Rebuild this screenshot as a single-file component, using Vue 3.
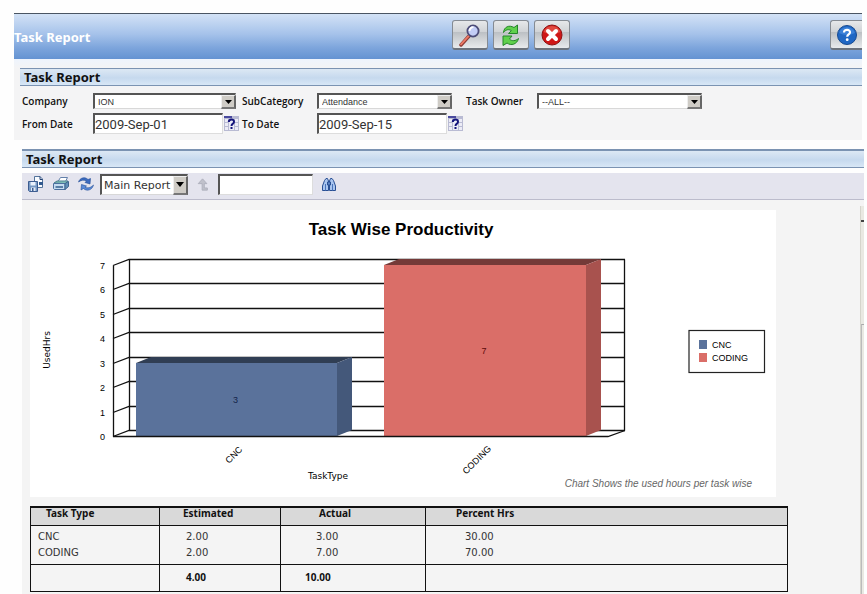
<script setup>
import { ref } from 'vue'

const company = ref('ION')
const subCategory = ref('Attendance')
const taskOwner = ref('--ALL--')
const fromDate = ref('2009-Sep-01')
const toDate = ref('2009-Sep-15')
const reportView = ref('Main Report')
const searchText = ref('')

const axis = { frontX: 83, backX: 99, rightX: 595, frontZero: 226, backZero: 220, unit: 24.43 }
const ticks = [0, 1, 2, 3, 4, 5, 6, 7].map((value) => ({
  value,
  front: Math.round(axis.frontZero - value * axis.unit) + 0.5,
  back: Math.round(axis.backZero - value * axis.unit) + 0.5,
}))

const bars = [
  { name: 'CNC', value: 3, x: 106, right: 307, labelX: 206, labelY: 247, face: '#5a729b', side: '#44587a', top: '#303e54', ink: '#14244a' },
  { name: 'CODING', value: 7, x: 354, right: 556, labelX: 449, labelY: 252, face: '#da6e68', side: '#a8524e', top: '#743a38', ink: '#5a0a0a' },
].map((bar) => ({
  ...bar,
  y: Math.round(axis.frontZero - bar.value * axis.unit),
  depth: 15,
  rise: 6,
}))

const rows = [
  { type: 'CNC', estimated: '2.00', actual: '3.00', percent: '30.00' },
  { type: 'CODING', estimated: '2.00', actual: '7.00', percent: '70.00' },
]
</script>

<template>
  <div class="page">
    <header class="banner">
      <h1 class="banner-title">Task Report</h1>
      <div class="banner-actions">
        <button type="button" class="tool-button" aria-label="Search">
          <svg width="24" height="24" viewBox="0 0 24 24">
            <path d="M3 22 L11 13" stroke="#8d3b35" stroke-width="3.4" stroke-linecap="round" />
            <path d="M3 21.4 L11 12.6" stroke="#ee7a66" stroke-width="1.8" stroke-linecap="round" />
            <circle cx="15" cy="8" r="5.600" fill="#c3cdf6" stroke="#4c4c78" stroke-width="1.8" />
            <path d="M11.5 8 A3.8 3.8 0 0 1 15.5 4.2" fill="none" stroke="#fff" stroke-width="1.8" />
          </svg>
        </button>
        <button type="button" class="tool-button" aria-label="Refresh">
          <svg width="24" height="24" viewBox="0 0 24 24">
            <path d="M4.500 9.500 C5 4 10 1.500 15 4.500 L18.500 2 V10.500 H9.500 L12.300 7.600 C9.500 6 7 6.500 4.500 9.500 Z" fill="#5fd04c" stroke="#25852a" stroke-linejoin="round" />
            <path d="M19.500 15.500 C18 21.500 12 23 8 20 L4 22.500 V13 H13 L10.500 16 C13 18.500 16.500 18 19.500 15.500 Z" fill="#5fd04c" stroke="#25852a" stroke-linejoin="round" />
          </svg>
        </button>
        <button type="button" class="tool-button" aria-label="Close">
          <svg width="24" height="24" viewBox="0 0 24 24">
            <circle cx="12" cy="12" r="10" fill="#cf1717" stroke="#8e1212" />
            <path d="M3.500 9 A9 9 0 0 1 20.500 9 Q12 13 3.500 9 Z" fill="#e0493f" />
            <path d="M8 8 L16 16 M16 8 L8 16" stroke="#fff" stroke-width="4" stroke-linecap="round" />
          </svg>
        </button>
      </div>
      <button type="button" class="tool-button help-button" aria-label="Help">
        <svg width="22" height="22" viewBox="0 0 22 22">
          <circle cx="11" cy="11" r="9.500" fill="#1f67c4" stroke="#174a91" />
          <path d="M3 9 A8.500 8.500 0 0 1 19 9 Q11 13 3 9 Z" fill="#3a80d8" />
          <path d="M8 8.500 C8 4.800 14.300 5 14 8.500 C13.800 10.600 11.200 10.400 11.200 12.800" fill="none" stroke="#fff" stroke-width="2.200" />
          <circle cx="11.200" cy="15.700" r="1.400" fill="#fff" />
        </svg>
      </button>
    </header>

    <section class="filter-panel">
      <h2 class="panel-title">Task Report</h2>
      <form class="filters" @submit.prevent>
        <label for="company">Company</label>
        <div class="drop drop-company">
          <select id="company" v-model="company"><option>ION</option></select>
          <span class="drop-arrow"><svg width="7" height="4" viewBox="0 0 7 4"><path d="M0 0H7L3.500 4Z" /></svg></span>
        </div>
        <label for="sub-category">SubCategory</label>
        <div class="drop drop-sub">
          <select id="sub-category" v-model="subCategory"><option>Attendance</option></select>
          <span class="drop-arrow"><svg width="7" height="4" viewBox="0 0 7 4"><path d="M0 0H7L3.500 4Z" /></svg></span>
        </div>
        <label for="task-owner">Task Owner</label>
        <div class="drop">
          <select id="task-owner" v-model="taskOwner"><option>--ALL--</option></select>
          <span class="drop-arrow"><svg width="7" height="4" viewBox="0 0 7 4"><path d="M0 0H7L3.500 4Z" /></svg></span>
        </div>
        <label for="from-date">From Date</label>
        <div class="date-field">
          <input id="from-date" v-model="fromDate" type="text" />
          <button type="button" class="calendar-button" aria-label="Pick from date">
            <svg width="15" height="15" viewBox="0 0 15 15">
              <path d="M0 0H15V15H0Z" fill="#b9bbd3" />
              <path d="M0 0H8V2H0Z" fill="#4a4a9e" />
              <path d="M1 3H4V6H1ZM1 7H4V10H1ZM1 11H4V14H1ZM11 3H14V6H11ZM11 7H14V10H11ZM11 11H14V14H11ZM5 3H10V14H5Z" fill="#ececf6" />
              <path d="M4.800 6 C4.800 2.600 10.200 2.600 10 6 C9.900 7.800 7.500 7.600 7.500 10" fill="none" stroke="#15157c" stroke-width="2" />
              <path d="M6.500 11H8.500V13H6.500Z" fill="#15157c" />
            </svg>
          </button>
        </div>
        <label for="to-date">To Date</label>
        <div class="date-field">
          <input id="to-date" v-model="toDate" type="text" />
          <button type="button" class="calendar-button" aria-label="Pick to date">
            <svg width="15" height="15" viewBox="0 0 15 15">
              <path d="M0 0H15V15H0Z" fill="#b9bbd3" />
              <path d="M0 0H8V2H0Z" fill="#4a4a9e" />
              <path d="M1 3H4V6H1ZM1 7H4V10H1ZM1 11H4V14H1ZM11 3H14V6H11ZM11 7H14V10H11ZM11 11H14V14H11ZM5 3H10V14H5Z" fill="#ececf6" />
              <path d="M4.800 6 C4.800 2.600 10.200 2.600 10 6 C9.900 7.800 7.500 7.600 7.500 10" fill="none" stroke="#15157c" stroke-width="2" />
              <path d="M6.500 11H8.500V13H6.500Z" fill="#15157c" />
            </svg>
          </button>
        </div>
      </form>
    </section>

    <section class="report-panel">
      <h2 class="panel-title">Task Report</h2>
      <div class="toolbar">
        <button type="button" class="icon-button" aria-label="Export">
          <svg width="16" height="16" viewBox="0 0 16 16">
            <path d="M6.500 0.500H12L14.500 3V11.500H6.500Z" fill="#f8fbff" stroke="#53739a" />
            <path d="M12 0.500V3.500H14.500" fill="none" stroke="#223f70" />
            <path d="M11 6H15V9H11Z" fill="#31598e" />
            <path d="M0.500 5.500H9.500V15.500H1.500L0.500 14.500Z" fill="#7799c4" stroke="#3d5d91" />
            <path d="M2.500 6H7.500V9.500H2.500Z" fill="#eaf2fd" />
            <path d="M3 11.500H7.500V15H3Z" fill="#e3ebf6" />
            <path d="M4 12H5.500V15H4Z" fill="#3d5d91" />
          </svg>
        </button>
        <button type="button" class="icon-button" aria-label="Print">
          <svg width="16" height="16" viewBox="0 0 16 16">
            <path d="M5 5.500L7.500 1.500H14.500L12.500 5.500Z" fill="#fff" stroke="#6280aa" />
            <path d="M1 7L4 5H15L12.500 7.500Z" fill="#83c4ba" stroke="#4c7f90" />
            <path d="M0.500 7.500H12V13.500H1.500L0.500 12.500Z" fill="#c5dcf0" stroke="#4b709f" />
            <path d="M12 7.500L15.500 5.500V10.500L12 13.500Z" fill="#6290b7" stroke="#3c658f" />
            <path d="M2.500 11H10" stroke="#35618f" stroke-width="1.500" />
          </svg>
        </button>
        <button type="button" class="icon-button" aria-label="Reload">
          <svg width="16" height="16" viewBox="0 0 16 16">
            <path d="M0.500 6C2 1.500 7 0.500 10 3.500L12.500 2.500L12 8L7 6.500L8.500 5C6 3.500 3.500 4 0.500 6Z" fill="#3d6cc0" stroke="#224b96" stroke-width="0.600" />
            <path d="M15.500 9C14 14.500 8.500 15.500 5.500 12.500L3 14L3.500 8.500L8.500 10L7 11.200C9.500 12.500 12.500 12 15.500 9Z" fill="#5a8bd8" stroke="#224b96" stroke-width="0.600" />
          </svg>
        </button>
        <div class="drop view-drop">
          <select v-model="reportView" aria-label="Report view"><option>Main Report</option></select>
          <span class="drop-arrow"><svg width="8" height="5" viewBox="0 0 8 5"><path d="M0 0H8L4 5Z" /></svg></span>
        </div>
        <button type="button" class="icon-button up-button" aria-label="Go to parent">
          <svg width="12" height="13" viewBox="0 0 12 15">
            <path d="M5.500 1L10.500 6.500H7.500V11.500H11V14H5V6.500H0.500Z" fill="#c0c1cb" stroke="#acaebb" />
          </svg>
        </button>
        <input v-model="searchText" class="find-input" type="text" aria-label="Find text" />
        <button type="button" class="icon-button" aria-label="Find">
          <svg width="14" height="15" viewBox="0 0 14 15">
            <path d="M2.500 3.500L4 1.500H5.500L6.500 4V13.500H0.500V9Z" fill="#a9c5ef" stroke="#294f93" />
            <path d="M11.500 3.500L10 1.500H8.500L7.500 4V13.500H13.500V9Z" fill="#a9c5ef" stroke="#294f93" />
            <path d="M3.500 7V13.500M10.500 7V13.500" stroke="#4a74ba" />
            <path d="M5.500 5H8.500V8H5.500Z" fill="#5d84c4" stroke="#294f93" />
          </svg>
        </button>
      </div>

      <div class="report-body">
        <div class="report-content">
          <svg class="chart" viewBox="0 0 746 287" role="img" aria-label="Task Wise Productivity">
            <rect width="746" height="287" fill="#fff" />
            <text class="chart-title" x="371" y="25" text-anchor="middle">Task Wise Productivity</text>

            <g stroke="#111" stroke-width="1.300" fill="none">
              <template v-for="tick in ticks" :key="tick.value">
                <path :d="`M${axis.frontX} ${tick.front}L${axis.backX} ${tick.back}H${axis.rightX}`" />
              </template>
              <path :d="`M${axis.frontX + 0.5} ${ticks[7].front}V${ticks[0].front}`" />
              <path :d="`M${axis.backX + 0.5} ${ticks[7].back}V${ticks[0].back}`" />
              <path :d="`M${axis.rightX - 0.5} ${ticks[7].back}V${ticks[0].back}`" />
            </g>

            <g v-for="bar in bars" :key="bar.name">
              <path :fill="bar.top" :d="`M${bar.x} ${bar.y}L${bar.x + bar.depth} ${bar.y - bar.rise}H${bar.right + bar.depth}L${bar.right} ${bar.y}Z`" />
              <path :fill="bar.side" :d="`M${bar.right} ${bar.y}l${bar.depth} ${-bar.rise}V${axis.backZero}L${bar.right} ${axis.frontZero}Z`" />
              <rect :fill="bar.face" :x="bar.x" :y="bar.y" :width="bar.right - bar.x" :height="axis.frontZero - bar.y" />
              <text class="chart-label" :fill="bar.ink" :x="(bar.x + bar.right) / 2 - 1" :y="(bar.y + axis.frontZero) / 2 + 3" text-anchor="middle">{{ bar.value }}</text>
              <text class="chart-label" text-anchor="middle" :transform="`translate(${bar.labelX} ${bar.labelY}) rotate(-45)`">{{ bar.name }}</text>
            </g>
            <path :d="`M${axis.frontX} 226.500H578L595 220.500`" stroke="#111" stroke-width="1.300" fill="none" />

            <text v-for="tick in ticks" :key="tick.value" class="chart-label" x="75" :y="tick.front + 3" text-anchor="end">{{ tick.value }}</text>
            <text class="chart-axis" text-anchor="middle" transform="translate(20 140) rotate(-90)">UsedHrs</text>
            <text class="chart-axis" x="298" y="269" text-anchor="middle">TaskType</text>

            <rect x="659" y="120.500" width="75.500" height="42" fill="#fff" stroke="#222" stroke-width="1.200" />
            <g v-for="(bar, index) in bars" :key="bar.name">
              <rect :fill="bar.face" x="669" :y="130 + index * 13" width="8" height="9" />
              <text class="chart-label" x="682" :y="138 + index * 13">{{ bar.name }}</text>
            </g>
            <text class="chart-note" x="722" y="277" text-anchor="end">Chart Shows the used hours per task wise</text>
          </svg>

          <table class="report-table">
            <colgroup>
              <col class="col-type" />
              <col class="col-estimated" />
              <col class="col-actual" />
              <col />
            </colgroup>
            <thead>
              <tr>
                <th>Task Type</th>
                <th>Estimated</th>
                <th>Actual</th>
                <th>Percent Hrs</th>
              </tr>
            </thead>
            <tbody>
              <tr v-for="row in rows" :key="row.type">
                <td>{{ row.type }}</td>
                <td>{{ row.estimated }}</td>
                <td>{{ row.actual }}</td>
                <td>{{ row.percent }}</td>
              </tr>
            </tbody>
            <tfoot>
              <tr>
                <td></td>
                <td>4.00</td>
                <td>10.00</td>
                <td></td>
              </tr>
            </tfoot>
          </table>
        </div>
        <div class="scroll-edge"><span class="scroll-cap"></span><span class="scroll-thumb"></span></div>
      </div>
    </section>
  </div>
</template>

<style>
body {
  margin: 0;
  background: #fefefe;
}
</style>

<style scoped>
.page,
.page * {
  box-sizing: border-box;
}

.page {
  display: flex;
  flex-direction: column;
  min-height: 100vh;
  padding: 13px 3px 0 14px;
  font-family: "Noto Sans", "Open Sans", sans-serif;
  color: #111;
}

button {
  margin: 0;
  padding: 0;
  border: 0;
  background: none;
}

svg {
  display: block;
}

.banner {
  display: flex;
  align-items: flex-start;
  height: 46px;
  margin-right: 2px;
  border-top: 1px solid #4a5563;
  background: linear-gradient(#d3e2f6, #a5c2ea 45%, #7da5dc 75%, #6493d2);
}

.banner-title {
  width: 51.7%;
  margin: 0;
  font-size: 13px;
  font-weight: 700;
  line-height: 46px;
  color: #fff;
}

.banner-actions {
  display: flex;
  flex: 1;
  gap: 5px;
  padding-top: 6px;
}

.tool-button {
  display: flex;
  align-items: center;
  justify-content: center;
  width: 36px;
  height: 30px;
  border: 1px solid #858b93;
  border-bottom: 2px solid #6c737d;
  border-radius: 3px;
  background: linear-gradient(#e6e8ea, #d0d3d6 40%, #bcc0c4 42%, #e8eaec);
}

.help-button {
  width: 32px;
  margin-top: 6px;
  border-right: 0;
  border-radius: 3px 0 0 3px;
}

.filter-panel {
  margin-right: 2px;
  padding: 9px 0 0 6px;
  background: linear-gradient(#eef4fd, #f4f4f5 9px);
}

.panel-title {
  height: 18px;
  margin: 0;
  padding-left: 4px;
  border-top: 1px solid #7b93b2;
  border-bottom: 1px solid #7b93b2;
  background: linear-gradient(#dce8f4, #c6d9ee 55%, #d8e7f6);
  font-size: 13px;
  font-weight: 700;
  line-height: 17px;
}

.filters {
  display: grid;
  grid-template-columns: 71px 149px 75px 149px 71px 165px;
  align-items: center;
  row-gap: 4px;
  padding: 7px 0 6px 2px;
}

.filters label {
  font-family: "Open Sans", "Noto Sans", sans-serif;
  font-size: 10px;
  font-weight: 600;
  line-height: 16px;
}

.drop {
  position: relative;
  height: 16px;
}

.drop-company {
  width: 143px;
}

.drop-sub {
  width: 135px;
}

.drop select {
  display: block;
  width: 100%;
  height: 100%;
  margin: 0;
  padding: 0 16px 0 3px;
  appearance: none;
  border: 1px solid #d8d8d8;
  border-top: 2px solid #555;
  border-left: 2px solid #555;
  border-radius: 0;
  background: #fff;
  font-family: "Liberation Sans", sans-serif;
  font-size: 9px;
  color: #333;
}

.drop-arrow {
  position: absolute;
  top: 2px;
  right: 0;
  bottom: 0;
  display: flex;
  align-items: center;
  justify-content: center;
  width: 15px;
  border: 1px solid #eee;
  border-right: 2px solid #666;
  border-bottom: 2px solid #777;
  background: #cfccc6;
  pointer-events: none;
}

.date-field {
  display: flex;
  align-items: center;
  gap: 1px;
}

.date-field input,
.find-input {
  margin: 0;
  padding: 0;
  border: 1px solid #ddd;
  border-top: 2px solid #555;
  border-left: 2px solid #555;
  border-radius: 0;
  background: #fff;
  font-family: Roboto, sans-serif;
  font-size: 13px;
  color: #333;
}

.date-field input {
  width: 130px;
  height: 21px;
}

.report-panel {
  display: flex;
  flex: 1;
  flex-direction: column;
  margin-top: 9px;
  padding-left: 8px;
}

.report-panel .panel-title {
  height: 19px;
  border-top-width: 2px;
}

.toolbar {
  display: flex;
  align-items: center;
  height: 27px;
  margin-top: 5px;
  padding: 0 6px 4px;
  gap: 9px;
  border-bottom: 1px solid #bcbccc;
  background: #e4e4ee;
}

.view-drop {
  width: 88px;
  height: 21px;
  margin-left: -3px;
}

.view-drop select {
  padding: 1px 0 0 2px;
  font-family: "DejaVu Sans", sans-serif;
  font-size: 11px;
}

.find-input {
  width: 95px;
  height: 21px;
}

.report-body {
  display: flex;
  flex: 1;
  justify-content: space-between;
  background: #f4f4f4;
}

.report-content {
  flex: 1;
  max-width: 766px;
  padding: 10px 0 0 8px;
}

.chart {
  width: 100%;
  max-width: 746px;
}

.chart-title {
  font-family: "Liberation Sans", sans-serif;
  font-size: 17px;
  font-weight: 700;
}

.chart-label {
  font-family: "Liberation Sans", sans-serif;
  font-size: 9px;
}

.chart-axis {
  font-family: "DejaVu Sans", sans-serif;
  font-size: 9px;
}

.chart-note {
  font-family: "Liberation Sans", sans-serif;
  font-size: 10px;
  font-style: italic;
  fill: #666;
}

.report-table {
  width: 100%;
  margin-top: 9px;
  border: 1px solid #111;
  border-top-width: 2px;
  border-collapse: collapse;
  table-layout: fixed;
}

.col-type {
  width: 129px;
}

.col-estimated {
  width: 121px;
}

.col-actual {
  width: 145px;
}

.report-table th,
.report-table td {
  padding: 0 0 0 7px;
  border-left: 1px solid #111;
  text-align: left;
}

.report-table th {
  height: 18px;
  padding-left: 15px;
  border-bottom: 1px solid #111;
  background: #d9d9d9;
  font-size: 10px;
  font-weight: 700;
  line-height: 11px;
  vertical-align: top;
}

.report-table tbody td {
  height: 16px;
  font-family: "DejaVu Sans", sans-serif;
  font-size: 10px;
  line-height: 16px;
  color: #333;
}

.report-table tbody tr:first-child td {
  height: 19px;
  padding-top: 3px;
}

.report-table tbody tr:last-child td {
  height: 19px;
  padding-bottom: 3px;
}

.report-table tfoot td {
  height: 27px;
  padding-bottom: 2px;
  border-top: 1px solid #111;
  font-size: 10px;
  font-weight: 700;
}

.report-table th:nth-child(2) {
  padding-left: 23px;
}

.report-table td:nth-child(2) {
  padding-left: 26px;
}

.report-table th:nth-child(3) {
  padding-left: 38px;
}

.report-table td:nth-child(3) {
  padding-left: 35px;
}

.report-table tfoot td:nth-child(3) {
  padding-left: 24px;
}

.report-table th:nth-child(4) {
  padding-left: 30px;
}

.report-table td:nth-child(4) {
  padding-left: 39px;
}

.scroll-edge {
  display: flex;
  flex-direction: column;
  gap: 102px;
  width: 4px;
  margin-top: 6px;
  border-left: 1px solid #d5d5cc;
  background: #e9e9e2;
}

.scroll-cap {
  height: 16px;
  border-bottom: 2px solid #444;
}

.scroll-thumb {
  flex: 1;
  border-top: 1px solid #aaa;
  border-left: 1px solid #bbb;
}
</style>
